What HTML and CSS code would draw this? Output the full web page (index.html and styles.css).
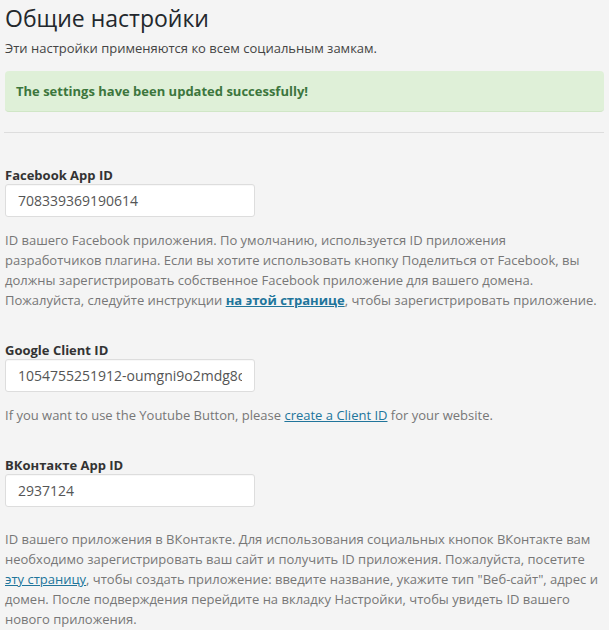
FILE: index.html
```html
<!DOCTYPE html>
<html>
<head>
<meta charset="utf-8" />
<title>Общие настройки</title>
<link rel="stylesheet" href="styles.css">
</head>
<body>
<div class="wrap">
  <h2 class="title">Общие настройки</h2>
  <p class="intro">Эти настройки применяются ко всем социальным замкам.</p>

  <div class="notice">The settings have been updated successfully!</div>

  <hr class="sep" />

  <div class="field first">
    <label class="lbl" for="fb_app">Facebook App ID</label>
    <input class="txt" id="fb_app" type="text" value="708339369190614" />
    <p class="help">ID вашего Facebook приложения. По умолчанию, используется ID приложения разработчиков плагина. Если вы хотите использовать кнопку Поделиться от Facebook, вы должны зарегистрировать собственное Facebook приложение для вашего домена. Пожалуйста, следуйте инструкции <a class="strong" href="#">на этой странице</a>, чтобы зарегистрировать приложение.</p>
  </div>

  <div class="field">
    <label class="lbl" for="g_client">Google Client ID</label>
    <input class="txt" id="g_client" type="text" value="1054755251912-oumgni9o2mdg8ctf4c8q0a.apps.googleusercontent.com" />
    <p class="help">If you want to use the Youtube Button, please <a href="#">create a Client ID</a> for your website.</p>
  </div>

  <div class="field">
    <label class="lbl" for="vk_app">ВКонтакте App ID</label>
    <input class="txt" id="vk_app" type="text" value="2937124" />
    <p class="help long">ID вашего приложения в ВКонтакте. Для использования социальных кнопок ВКонтакте вам необходимо зарегистрировать ваш сайт и получить ID приложения. Пожалуйста, посетите <a href="#">эту страницу</a>, чтобы создать приложение: введите название, укажите тип "Веб-сайт", адрес и домен. После подверждения перейдите на вкладку Настройки, чтобы увидеть ID вашего нового приложения.</p>
  </div>
</div>
</body>
</html>
```

FILE: styles.css
```css
*{padding:0;margin:0;box-sizing:border-box;}
body{background:#f4f4f4;font-family:"Open Sans",sans-serif;font-size:13px;color:#444;}
a{color:#21759b;text-decoration:underline;}
.wrap{padding:0 5px;}
.title{font-size:23px;font-weight:400;line-height:29px;color:#23282d;padding:4px 0 0 0;}
.intro{line-height:20px;margin:5px 0 0 0;color:#444;}
.notice{margin:13px 0 0 0;height:41px;line-height:40px;padding:0 11px;background:#dff0d8;border-bottom:1px solid #d0e6c6;border-radius:4px;color:#3c763d;font-weight:700;}
.sep{border:none;border-top:1px solid #ddd;margin:20px 0 0 -1px;}
.field{margin:31px 0 0 0;}
.field.first{margin-top:33px;}
.lbl{display:block;font-weight:700;color:#333;line-height:18px;}
.txt{display:block;width:250px;height:33px;margin:0;padding:0 12px;border:1px solid #ddd;border-radius:3px;background:#fff;font-family:"Open Sans",sans-serif;font-size:14px;color:#555;outline:none;box-shadow:inset 0 1px 1px rgba(0,0,0,.03);}
.help{color:#777;line-height:20px;margin:13px 0 0 0;}
.help.long{margin-top:22px;}
.help a.strong{font-weight:700;}
```
